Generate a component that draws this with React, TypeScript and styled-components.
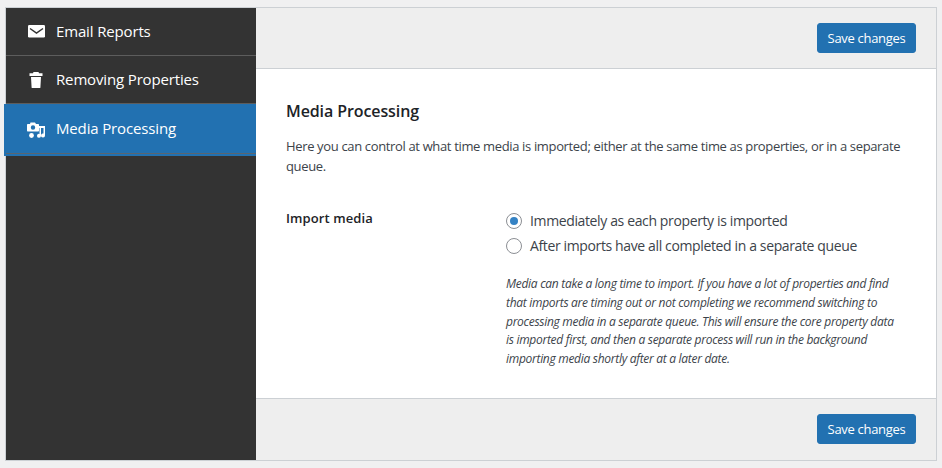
import React from 'react';
import styled, {createGlobalStyle} from 'styled-components';

const GlobalStyle = createGlobalStyle`
  html, body {
    margin: 0;
    padding: 0;
    background: #f0f0f1;
    font-family: "Open Sans", "Noto Sans", sans-serif;
    color: #3c434a;
  }
`;

const Page = styled.div`
  width: 942px;
  height: 468px;
  box-sizing: border-box;
  padding: 7px 5px;
  overflow: hidden;
`;

const Settings = styled.div`
  display: flex;
  height: 454px;
  box-sizing: border-box;
  border: 1px solid #ccd0d4;
  background: #fff;
`;

const Sidebar = styled.ul`
  width: 250px;
  flex: none;
  margin: 0;
  padding: 0;
  list-style: none;
  background: #333;
`;

const NavItem = styled.li<{$active?: boolean}>`
  display: flex;
  align-items: center;
  box-sizing: border-box;
  height: 48px;
  padding: 0 0 2px 21px;
  gap: 9px;
  color: #fff;
  font-size: 15px;
  letter-spacing: -0.15px;
  border-bottom: 1px solid #5d5d5d;
  ${(p) =>
    p.$active &&
    `
    position: relative;
    height: 52px;
    margin-left: -2px;
    padding: 0 0 5px 23px;
    background: #2271b1;
    border-bottom: none;
    &::after {
      content: '';
      position: absolute;
      left: 2px;
      right: 0;
      bottom: 2px;
      height: 1px;
      background: #5a6570;
    }
  `}
`;

const NavIcon = styled.svg`
  width: 20px;
  height: 20px;
  flex: none;
  fill: #fff;
`;

const Main = styled.div`
  flex: 1;
  min-width: 0;
  display: flex;
  flex-direction: column;
`;

const ActionBar = styled.div<{$bottom?: boolean}>`
  flex: none;
  display: flex;
  justify-content: flex-end;
  align-items: flex-start;
  box-sizing: border-box;
  height: ${(p) => (p.$bottom ? '62px' : '61px')};
  padding: 15px 20px 0 0;
  background: #eee;
  ${(p) => (p.$bottom ? 'border-top: 1px solid #ccd0d4;' : 'border-bottom: 1px solid #ccd0d4;')}
`;

const SaveButton = styled.button`
  width: 99px;
  height: 30px;
  padding: 0;
  border: 1px solid #2271b1;
  border-radius: 3px;
  background: #2271b1;
  color: #fff;
  font-family: inherit;
  font-size: 13px;
  letter-spacing: -0.3px;
`;

const Content = styled.div`
  flex: 1;
  min-height: 0;
  padding: 30px 30px 0;
`;

const Heading = styled.h2`
  margin: 0;
  font-size: 16px;
  line-height: 24px;
  font-weight: 600;
  color: #1d2327;
  letter-spacing: -0.1px;
`;

const Intro = styled.p`
  margin: 13px 0 0;
  font-size: 13px;
  line-height: 20px;
  letter-spacing: -0.35px;
`;

const FieldRow = styled.div`
  display: flex;
  margin-top: 32px;
`;

const FieldLabel = styled.div`
  width: 220px;
  flex: none;
  font-size: 13px;
  line-height: 20px;
  font-weight: 600;
  color: #1d2327;
  letter-spacing: 0.09px;
`;

const FieldBody = styled.div`
  flex: 1;
  min-width: 0;
`;

const RadioRow = styled.label`
  display: flex;
  align-items: center;
  height: 25px;
  gap: 8px;
  font-size: 14px;
  letter-spacing: -0.37px;
`;

const RadioMark = styled.span<{$checked?: boolean}>`
  width: 16px;
  height: 16px;
  flex: none;
  box-sizing: border-box;
  border: 1px solid #8c8f94;
  border-radius: 50%;
  background: #fff;
  display: flex;
  align-items: center;
  justify-content: center;
  &::before {
    content: '';
    width: 8px;
    height: 8px;
    border-radius: 50%;
    background: ${(p) => (p.$checked ? '#3582c4' : 'transparent')};
  }
`;

const Help = styled.p`
  margin: 17px 0 0;
  width: 392px;
  font-size: 12px;
  line-height: 18.8px;
  font-style: italic;
  letter-spacing: -0.29px;
`;

export default function App() {
  return (
    <Page>
      <GlobalStyle />
      <Settings>
        <Sidebar>
          <NavItem>
            <NavIcon viewBox="0 0 20 20">
              <rect x="1" y="4" width="17" height="12.500" rx="1.200" />
              <path d="M3 7.500l6.500 4.500 6.500-4.500" fill="none" stroke="#333" strokeWidth="1.500" />
            </NavIcon>
            Email Reports
          </NavItem>
          <NavItem>
            <NavIcon viewBox="0 0 20 20">
              <path d="M6.500 3h5l.5 1.200h3.500V7h-13V4.200H6z" />
              <path d="M4 8h10l-.6 10.500c0 .4-.3.500-.6.500H5.200c-.3 0-.6-.1-.6-.5z" />
            </NavIcon>
            Removing Properties
          </NavItem>
          <NavItem $active>
            <NavIcon viewBox="0 0 20 20">
              <path
                fillRule="evenodd"
                d="M3.500 4.500h4.500L9 6h2c.6 0 1 .4 1 1v5.500c0 .6-.4 1-1 1H1c-.6 0-1-.4-1-1V7c0-.6.4-1 1-1h2zm2.500 2.800a2.200 2.200 0 1 0 0 4.400 2.200 2.200 0 0 0 0-4.400z"
              />
              <circle cx="4.500" cy="17.500" r="2.400" />
              <path d="M12 8h6v9.500a2 2 0 1 1-1.500-1.900V10H14v7.800a2 2 0 1 1-1.500-1.900V10H12z" />
            </NavIcon>
            Media Processing
          </NavItem>
        </Sidebar>
        <Main>
          <ActionBar>
            <SaveButton>Save changes</SaveButton>
          </ActionBar>
          <Content>
            <Heading>Media Processing</Heading>
            <Intro>
              Here you can control at what time media is imported; either at the same time as properties, or in a separate queue.
            </Intro>
            <FieldRow>
              <FieldLabel>Import media</FieldLabel>
              <FieldBody>
                <RadioRow>
                  <RadioMark $checked />
                  Immediately as each property is imported
                </RadioRow>
                <RadioRow>
                  <RadioMark />
                  After imports have all completed in a separate queue
                </RadioRow>
                <Help>
                  Media can take a long time to import. If you have a lot of properties and find that imports are timing out or not completing we recommend switching to processing media in a separate queue. This will ensure the core property data is imported first, and then a separate process will run in the background importing media shortly after at a later date.
                </Help>
              </FieldBody>
            </FieldRow>
          </Content>
          <ActionBar $bottom>
            <SaveButton>Save changes</SaveButton>
          </ActionBar>
        </Main>
      </Settings>
    </Page>
  );
}
